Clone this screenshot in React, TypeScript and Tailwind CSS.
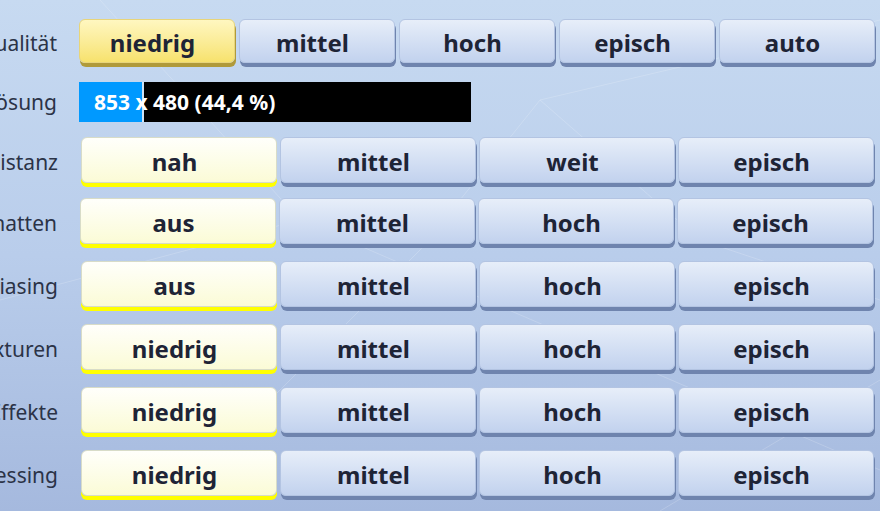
import React from "react";

type Kind = "normal" | "gold" | "pale";

function Btn({ label, kind, w, h }: { label: string; kind: Kind; w: string; h: string }) {
  const base =
    "flex items-center justify-center rounded-[6px] border text-[24px] font-bold text-[#1e2436] leading-none pt-[4px] pr-[9px]";
  const cls =
    kind === "gold"
      ? "bg-gradient-to-b from-[#fff7c0] to-[#f7e26c] border-[#e8d57a] shadow-[1px_4px_0_#b09a3a]"
      : kind === "pale"
      ? "bg-gradient-to-b from-[#fffffb] to-[#fbfbd6] border-[#d8dcc8] shadow-[0_4px_0_#ffff00]"
      : "bg-gradient-to-b from-[#e7eef9] to-[#c2d2ee] border-[#b3c4e2] shadow-[1px_4px_0_#6f84ae]";
  return <div className={`${base} ${cls} ${w} ${h}`}>{label}</div>;
}

function Label({ text, pt = "pt-[5px]" }: { text: string; pt?: string }) {
  return (
    <div className={`w-[57px] shrink-0 flex justify-end ${pt}`}>
      <span className="whitespace-nowrap text-[21px] text-[#2b3347] leading-none">{text}</span>
    </div>
  );
}

function Row4({ label, sel, opts, mt }: { label: string; sel: number; opts: string[]; mt: string }) {
  return (
    <div className={`flex items-center ${mt}`}>
      <Label text={label} />
      <div className="ml-[23px] flex gap-[3px]">
        {opts.map((o, i) => (
          <Btn key={i} label={o} kind={i === sel ? "pale" : "normal"} w="w-[196px]" h="h-[46px]" />
        ))}
      </div>
    </div>
  );
}

export default function App() {
  return (
    <div
      className="relative w-[880px] h-[511px] overflow-hidden bg-gradient-to-b from-[#c7daf1] via-[#b9cdeb] to-[#a5b9de]"
      style={{ fontFamily: '"Noto Sans", "Open Sans", sans-serif' }}
    >
      <svg className="absolute inset-0 pointer-events-none" width="880" height="511">
        <g stroke="#ffffff" strokeOpacity="0.18" strokeWidth="1" fill="none">
          <line x1="540" y1="100" x2="880" y2="20" />
          <line x1="540" y1="100" x2="700" y2="240" />
          <line x1="540" y1="100" x2="420" y2="250" />
          <line x1="700" y1="240" x2="880" y2="300" />
          <line x1="420" y1="250" x2="250" y2="420" />
          <line x1="300" y1="220" x2="880" y2="470" />
          <line x1="100" y1="0" x2="300" y2="220" />
          <line x1="0" y1="300" x2="300" y2="220" />
          <line x1="660" y1="511" x2="880" y2="380" />
        </g>
      </svg>
      <div className="relative flex flex-col pt-[19px]">
        <div className="flex items-center">
          <Label text="Qualität" />
          <div className="ml-[22px] flex gap-[4px]">
            {["niedrig", "mittel", "hoch", "episch", "auto"].map((o, i) => (
              <Btn key={i} label={o} kind={i === 0 ? "gold" : "normal"} w="w-[156px]" h="h-[44px]" />
            ))}
          </div>
        </div>
        <div className="flex items-center mt-[19px]">
          <Label text="3D-Auflösung" pt="pt-0" />
          <div className="relative ml-[22px] flex h-[40px] w-[392px] bg-black">
            <div className="w-[63px] bg-[#0099ff]" />
            <div className="w-[2px] bg-[#cfe3f5]" />
            <div className="flex-1" />
            <div className="absolute left-[15px] top-0 h-[40px] flex items-center text-[21px] font-bold text-white leading-none">
              853 x 480 (44,4 %)
            </div>
          </div>
        </div>
        <Row4 label="Sichtdistanz" sel={0} opts={["nah", "mittel", "weit", "episch"]} mt="mt-[15px] ml-[1px]" />
        <Row4 label="Schatten" sel={0} opts={["aus", "mittel", "hoch", "episch"]} mt="mt-[15px]" />
        <Row4 label="Anti-Aliasing" sel={0} opts={["aus", "mittel", "hoch", "episch"]} mt="mt-[17px] ml-[1px]" />
        <Row4 label="Texturen" sel={0} opts={["niedrig", "mittel", "hoch", "episch"]} mt="mt-[17px] ml-[1px]" />
        <Row4 label="Effekte" sel={0} opts={["niedrig", "mittel", "hoch", "episch"]} mt="mt-[17px] ml-[1px]" />
        <Row4 label="Post-Processing" sel={0} opts={["niedrig", "mittel", "hoch", "episch"]} mt="mt-[17px] ml-[1px]" />
      </div>
    </div>
  );
}
